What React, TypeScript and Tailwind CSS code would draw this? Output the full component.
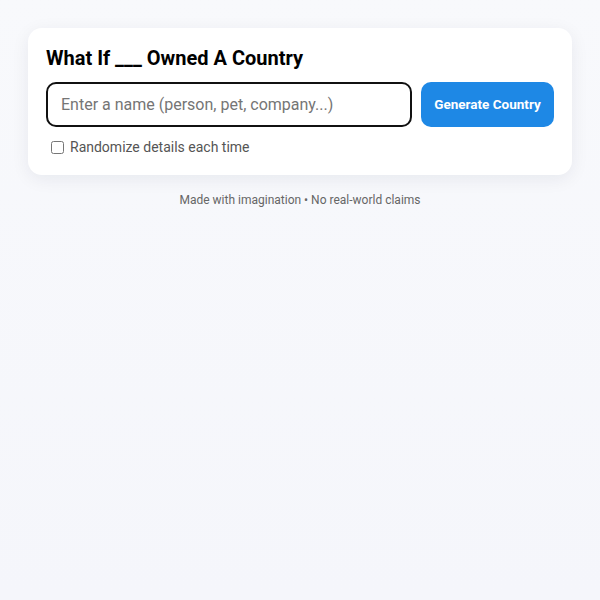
import { useState } from "react";

export default function App() {
  const [name, setName] = useState("");
  const [randomize, setRandomize] = useState(false);

  return (
    <div
      className="min-h-screen bg-gradient-to-b from-[#f8f9fc] to-[#f5f6fb] p-7"
      style={{ fontFamily: "Roboto, 'Liberation Sans', sans-serif" }}
    >
      <div className="rounded-[14px] bg-white p-[18px] shadow-[0_4px_18px_rgba(20,30,60,0.07)]">
        <h1 className="text-[20px] font-bold leading-6 text-black">What If ___ Owned A Country</h1>
        <div className="mt-3 flex gap-[9px]">
          <input
            value={name}
            onChange={(e) => setName(e.target.value)}
            placeholder="Enter a name (person, pet, company...)"
            className="h-[45px] min-w-0 flex-1 rounded-[10px] border-2 border-[#111] px-[13px] text-[16px] text-black outline-none placeholder:text-[#757575]"
          />
          <button
            type="button"
            className="h-[45px] w-[133px] rounded-[10px] bg-[#1e88e5] text-[13.5px] font-bold text-white"
            style={{ fontFamily: "Roboto, sans-serif" }}
          >
            Generate Country
          </button>
        </div>
        <label className="mt-[10px] flex items-center gap-[6px] pl-[5px] text-[14px] leading-5 text-[#555]">
          <input
            type="checkbox"
            checked={randomize}
            onChange={(e) => setRandomize(e.target.checked)}
            className="m-0 h-[13px] w-[13px]"
          />
          Randomize details each time
        </label>
      </div>
      <p className="mt-4 text-center text-[12px] leading-[18px] text-[#666]">
        Made with imagination • No real-world claims
      </p>
    </div>
  );
}
